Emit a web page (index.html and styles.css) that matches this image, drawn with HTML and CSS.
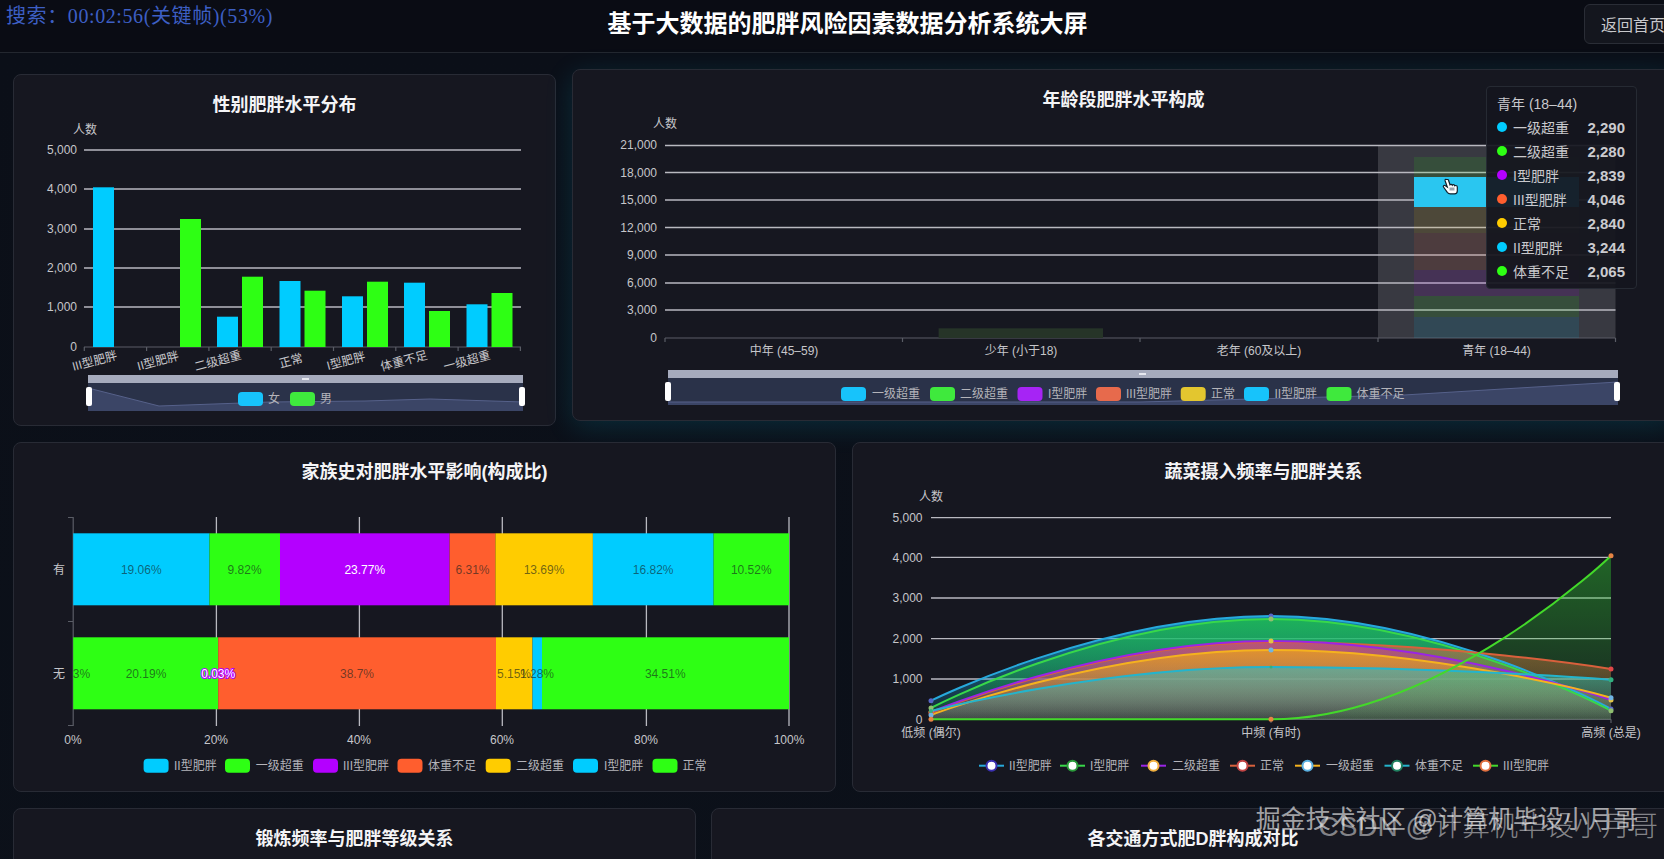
FILE: index.html
```html
<!DOCTYPE html>
<html lang="zh-CN">
<head>
<meta charset="utf-8">
<title>基于大数据的肥胖风险因素数据分析系统大屏</title>
<link rel="stylesheet" href="styles.css">
</head>
<body>
<div class="screen">
  <header class="topbar">
    <div class="topbar-spacer"></div>
    <h1 class="topbar-title">基于大数据的肥胖风险因素数据分析系统大屏</h1>
    <button class="back-btn">返回首页</button>
  </header>
  <main class="board">
    <section class="row row-one">
      <article class="card">
        <h2 class="card-title card-title-low">性别肥胖水平分布</h2>
        <svg class="chart" width="541" height="307" viewBox="14 118 541 307">
          <text class="t-axis mid" x="85" y="134">人数</text>
          <g class="grid">
            <line x1="84" x2="521" y1="150" y2="150"/><line x1="84" x2="521" y1="189" y2="189"/><line x1="84" x2="521" y1="229" y2="229"/><line x1="84" x2="521" y1="268" y2="268"/><line x1="84" x2="521" y1="307" y2="307"/>
          </g>
          <g class="t-axis end">
            <text x="77" y="154">5,000</text><text x="77" y="193">4,000</text><text x="77" y="233">3,000</text><text x="77" y="272">2,000</text><text x="77" y="311">1,000</text><text x="77" y="351">0</text>
          </g>
          <g class="axis">
            <line x1="84" x2="521" y1="347" y2="347"/>
            <line x1="84.3" x2="84.3" y1="347" y2="351"/><line x1="146.6" x2="146.6" y1="347" y2="351"/><line x1="208.9" x2="208.9" y1="347" y2="351"/><line x1="271.2" x2="271.2" y1="347" y2="351"/><line x1="333.5" x2="333.5" y1="347" y2="351"/><line x1="395.8" x2="395.8" y1="347" y2="351"/><line x1="458.1" x2="458.1" y1="347" y2="351"/><line x1="520.4" x2="520.4" y1="347" y2="351"/>
          </g>
          <g class="f-blue">
            <rect x="93" y="187.3" width="21" height="159.7"/><rect x="217" y="316.7" width="21" height="30.3"/><rect x="279.5" y="281" width="21" height="66"/><rect x="342" y="296.3" width="21" height="50.7"/><rect x="404" y="282.7" width="21" height="64.3"/><rect x="466.5" y="304.3" width="21" height="42.7"/>
          </g>
          <g class="f-green">
            <rect x="180" y="219" width="21" height="128"/><rect x="242" y="276.7" width="21" height="70.3"/><rect x="304.5" y="290.7" width="21" height="56.3"/><rect x="367" y="281.7" width="21" height="65.3"/><rect x="429" y="311" width="21" height="36"/><rect x="491.5" y="293" width="21" height="54"/>
          </g>
          <g class="t-axis mid">
            <text x="94.6" y="365" transform="rotate(-15 94.6 361)">III型肥胖</text>
            <text x="158" y="365" transform="rotate(-15 158 361)">II型肥胖</text>
            <text x="218" y="365" transform="rotate(-15 218 361)">二级超重</text>
            <text x="291" y="365" transform="rotate(-15 291 361)">正常</text>
            <text x="346" y="365" transform="rotate(-15 346 361)">I型肥胖</text>
            <text x="404" y="365" transform="rotate(-15 404 361)">体重不足</text>
            <text x="467" y="365" transform="rotate(-15 467 361)">一级超重</text>
          </g>
          <rect class="dz-strip" x="88" y="375" width="435" height="8"/>
          <rect class="dz-grip" x="302" y="378" width="7" height="2"/>
          <rect class="dz-body" x="88" y="383" width="435" height="28"/>
          <path class="dz-area" d="M88 388L159 406L270 402L365 401L430 399L523 402V411H88Z"/>
          <path class="dz-line" d="M88 388L159 406L270 402L365 401L430 399L523 402"/>
          <rect class="dz-handle" x="86" y="387" width="6" height="19" rx="2"/>
          <rect class="dz-handle" x="519" y="387" width="6" height="19" rx="2"/>
          <rect class="f-lblue" x="238" y="392" width="25" height="14" rx="4"/><text class="t-legend" x="268" y="403">女</text>
          <rect class="f-lgreen" x="290" y="392" width="25" height="14" rx="4"/><text class="t-legend" x="320" y="403">男</text>
        </svg>
      </article>
      <article class="card card-hover">
        <h2 class="card-title card-title-low">年龄段肥胖水平构成</h2>
        <svg class="chart" width="1101" height="307" viewBox="573 113 1101 307">
          <text class="t-axis mid" x="665" y="128">人数</text>
          <rect class="band" x="1378" y="145" width="237.5" height="193"/>
          <g class="grid">
            <line x1="665" x2="1615.5" y1="145.5" y2="145.5"/><line x1="665" x2="1615.5" y1="172.5" y2="172.5"/><line x1="665" x2="1615.5" y1="200" y2="200"/><line x1="665" x2="1615.5" y1="227.5" y2="227.5"/><line x1="665" x2="1615.5" y1="255" y2="255"/><line x1="665" x2="1615.5" y1="283" y2="283"/><line x1="665" x2="1615.5" y1="310" y2="310"/>
          </g>
          <g class="t-axis end">
            <text x="657" y="149">21,000</text><text x="657" y="177">18,000</text><text x="657" y="204">15,000</text><text x="657" y="232">12,000</text><text x="657" y="259">9,000</text><text x="657" y="287">6,000</text><text x="657" y="314">3,000</text><text x="657" y="342">0</text>
          </g>
          <g class="axis">
            <line x1="665" x2="1615.5" y1="338" y2="338"/>
            <line x1="665" x2="665" y1="338" y2="342"/><line x1="902.5" x2="902.5" y1="338" y2="342"/><line x1="1140" x2="1140" y1="338" y2="342"/><line x1="1378" x2="1378" y1="338" y2="342"/><line x1="1615.5" x2="1615.5" y1="338" y2="342"/>
          </g>
          <rect class="f-ghost-green" x="938.6" y="328.3" width="164.4" height="9.7"/>
          <g class="ghost">
            <rect class="f-blue" x="1414" y="317" width="165" height="21"/>
            <rect class="f-green" x="1414" y="296" width="165" height="21"/>
            <rect class="f-purple" x="1414" y="270" width="165" height="26"/>
            <rect class="f-orange" x="1414" y="233" width="165" height="37"/>
            <rect class="f-yellow" x="1414" y="207" width="165" height="26"/>
            <rect class="f-green" x="1414" y="157" width="165" height="20"/>
          </g>
          <rect class="f-hi" x="1414" y="177" width="165" height="30"/>
          <path class="hand" d="M1446.5 179.5c-.9-.4-1.7.2-1.4 1.2l2.2 6.3-2.3-1.5c-1-.6-2.2.5-1.5 1.5l3.8 5.3c.8 1 1.7 1.5 3 1.500h4.2c1.600 0 2.800-1.200 2.800-2.800v-3.900c0-1-.7-1.600-1.500-1.600-.4 0-.7.1-1 .3-.2-.8-.9-1.200-1.600-1.100-.4 0-.7.2-.9.500-.3-.7-1-1-1.600-.8-.3 0-.5.2-.7.400l-1.500-4.500c-.2-.4-.4-.6-.5-.8z"/>
          <rect class="hand-mark" x="1449.5" y="187.5" width="5" height="3"/>
          <g class="t-axis mid">
            <text x="784" y="355">中年 (45–59)</text><text x="1021" y="355">少年 (小于18)</text><text x="1259" y="355">老年 (60及以上)</text><text x="1496.5" y="355">青年 (18–44)</text>
          </g>
          <rect class="dz-strip" x="668" y="370" width="950" height="8"/>
          <rect class="dz-grip" x="1139" y="373" width="7" height="2"/>
          <rect class="dz-body" x="668" y="378" width="950" height="27"/>
          <path class="dz-area" d="M668 402L1140 402L1404 395L1618 382V405H668Z"/>
          <path class="dz-line" d="M668 402L1140 402L1404 395L1618 382"/>
          <rect class="dz-handle" x="665" y="382" width="6" height="19" rx="2"/>
          <rect class="dz-handle" x="1614" y="382" width="6" height="19" rx="2"/>
          <rect class="f-lblue" x="841" y="387" width="25" height="14" rx="4"/><text class="t-legend" x="872" y="398">一级超重</text>
          <rect class="f-lgreen" x="930" y="387" width="25" height="14" rx="4"/><text class="t-legend" x="960" y="398">二级超重</text>
          <rect class="f-lpurple" x="1017.5" y="387" width="25" height="14" rx="4"/><text class="t-legend" x="1048" y="398">I型肥胖</text>
          <rect class="f-lorange" x="1096" y="387" width="25" height="14" rx="4"/><text class="t-legend" x="1126" y="398">III型肥胖</text>
          <rect class="f-lyellow" x="1180.7" y="387" width="25" height="14" rx="4"/><text class="t-legend" x="1211" y="398">正常</text>
          <rect class="f-lblue" x="1244" y="387" width="25" height="14" rx="4"/><text class="t-legend" x="1274.4" y="398">II型肥胖</text>
          <rect class="f-lgreen" x="1326.5" y="387" width="25" height="14" rx="4"/><text class="t-legend" x="1356.6" y="398">体重不足</text>
        </svg>
        <div class="tooltip">
          <div class="tooltip-head">青年 (18–44)</div>
          <div class="tooltip-row"><i class="dot dot-blue"></i><span class="tooltip-name">一级超重</span><b class="tooltip-value">2,290</b></div>
          <div class="tooltip-row"><i class="dot dot-green"></i><span class="tooltip-name">二级超重</span><b class="tooltip-value">2,280</b></div>
          <div class="tooltip-row"><i class="dot dot-purple"></i><span class="tooltip-name">I型肥胖</span><b class="tooltip-value">2,839</b></div>
          <div class="tooltip-row"><i class="dot dot-orange"></i><span class="tooltip-name">III型肥胖</span><b class="tooltip-value">4,046</b></div>
          <div class="tooltip-row"><i class="dot dot-yellow"></i><span class="tooltip-name">正常</span><b class="tooltip-value">2,840</b></div>
          <div class="tooltip-row"><i class="dot dot-blue"></i><span class="tooltip-name">II型肥胖</span><b class="tooltip-value">3,244</b></div>
          <div class="tooltip-row"><i class="dot dot-green"></i><span class="tooltip-name">体重不足</span><b class="tooltip-value">2,065</b></div>
        </div>
      </article>
    </section>
    <section class="row row-two">
      <article class="card">
        <h2 class="card-title">家族史对肥胖水平影响(构成比)</h2>
        <svg class="chart" width="821" height="305" viewBox="14 486 821 305">
          <defs><clipPath id="plot-clip"><rect x="73.2" y="500" width="716" height="240"/></clipPath></defs>
          <g class="grid">
            <line x1="216.4" x2="216.4" y1="517" y2="726"/><line x1="359.4" x2="359.4" y1="517" y2="726"/><line x1="502.3" x2="502.3" y1="517" y2="726"/><line x1="646.4" x2="646.4" y1="517" y2="726"/><line x1="789" x2="789" y1="517" y2="726"/>
          </g>
          <path class="axis" d="M68 517.5H73.2V725.5H68M68 621.5H73.2"/>
          <g class="t-axis mid"><text x="59" y="573.5">有</text><text x="59" y="677.5">无</text></g>
          <rect class="f-blue" x="73.2" y="533.3" width="136.3" height="72"/>
          <rect class="f-green" x="209.5" y="533.3" width="70.5" height="72"/>
          <rect class="f-purple" x="280" y="533.3" width="169.6" height="72"/>
          <rect class="f-orange" x="449.6" y="533.3" width="45.8" height="72"/>
          <rect class="f-yellow" x="495.4" y="533.3" width="97.5" height="72"/>
          <rect class="f-blue" x="592.9" y="533.3" width="120.7" height="72"/>
          <rect class="f-green" x="713.6" y="533.3" width="75.4" height="72"/>
          <rect class="f-green" x="73.2" y="637.3" width="145" height="72"/>
          <rect class="f-orange" x="218.2" y="637.3" width="277.8" height="72"/>
          <rect class="f-yellow" x="496" y="637.3" width="36.5" height="72"/>
          <rect class="f-blue" x="532.5" y="637.3" width="9.5" height="72"/>
          <rect class="f-green" x="542" y="637.3" width="247" height="72"/>
          <g class="t-bar mid">
            <text x="141.3" y="573.5">19.06%</text><text x="244.6" y="573.5">9.82%</text><text class="t-bar-hi" x="364.8" y="573.5">23.77%</text><text x="472.5" y="573.5">6.31%</text><text x="544" y="573.5">13.69%</text><text x="653.2" y="573.5">16.82%</text><text x="751.3" y="573.5">10.52%</text>
            <text clip-path="url(#plot-clip)" x="73.2" y="677.5">0.03%</text><text x="146" y="677.5">20.19%</text><text class="t-bar-hi" x="218.2" y="677.5">0.03%</text><text x="357" y="677.5">38.7%</text><text x="514" y="677.5">5.15%</text><text x="537" y="677.5">1.28%</text><text x="665.3" y="677.5">34.51%</text>
          </g>
          <g class="t-axis mid">
            <text x="73" y="744">0%</text><text x="216" y="744">20%</text><text x="359" y="744">40%</text><text x="502" y="744">60%</text><text x="646" y="744">80%</text><text x="789" y="744">100%</text>
          </g>
          <rect class="f-blue r4" x="143.6" y="758.7" width="25" height="14"/><text class="t-legend" x="174" y="770">II型肥胖</text>
          <rect class="f-green r4" x="225" y="758.7" width="25" height="14"/><text class="t-legend" x="255.7" y="770">一级超重</text>
          <rect class="f-purple r4" x="313" y="758.7" width="25" height="14"/><text class="t-legend" x="343" y="770">III型肥胖</text>
          <rect class="f-orange r4" x="397.5" y="758.7" width="25" height="14"/><text class="t-legend" x="428" y="770">体重不足</text>
          <rect class="f-yellow r4" x="485.7" y="758.7" width="25" height="14"/><text class="t-legend" x="516" y="770">二级超重</text>
          <rect class="f-blue r4" x="573" y="758.7" width="25" height="14"/><text class="t-legend" x="604" y="770">I型肥胖</text>
          <rect class="f-green r4" x="652.5" y="758.7" width="25" height="14"/><text class="t-legend" x="682.5" y="770">正常</text>
        </svg>
      </article>
      <article class="card">
        <h2 class="card-title">蔬菜摄入频率与肥胖关系</h2>
        <svg class="chart" width="821" height="305" viewBox="853 486 821 305">
          <defs>
            <linearGradient id="a1" x1="0" y1="0" x2="0" y2="1"><stop class="s-blue" offset="0"/><stop class="s-blue s-end" offset="1"/></linearGradient>
            <linearGradient id="a2" x1="0" y1="0" x2="0" y2="1"><stop class="s-green" offset="0"/><stop class="s-green s-end" offset="1"/></linearGradient>
            <linearGradient id="a3" x1="0" y1="0" x2="0" y2="1"><stop class="s-purple" offset="0"/><stop class="s-purple s-end" offset="1"/></linearGradient>
            <linearGradient id="a4" x1="0" y1="0" x2="0" y2="1"><stop class="s-orange" offset="0"/><stop class="s-orange s-end" offset="1"/></linearGradient>
            <linearGradient id="a5" x1="0" y1="0" x2="0" y2="1"><stop class="s-yellow" offset="0"/><stop class="s-yellow s-end" offset="1"/></linearGradient>
            <linearGradient id="a6" x1="0" y1="0" x2="0" y2="1"><stop class="s-cyan" offset="0"/><stop class="s-cyan s-end" offset="1"/></linearGradient>
            <linearGradient id="a7" x1="0" y1="0" x2="0" y2="1"><stop class="s-green2" offset="0"/><stop class="s-green2 s-end" offset="1"/></linearGradient>
          </defs>
          <text class="t-axis mid" x="931" y="501">人数</text>
          <g class="grid">
            <line x1="931" x2="1611" y1="517.7" y2="517.7"/><line x1="931" x2="1611" y1="557.3" y2="557.3"/><line x1="931" x2="1611" y1="598" y2="598"/><line x1="931" x2="1611" y1="638.7" y2="638.7"/><line x1="931" x2="1611" y1="679" y2="679"/>
          </g>
          <g class="t-axis end">
            <text x="922.5" y="522">5,000</text><text x="922.5" y="562">4,000</text><text x="922.5" y="602">3,000</text><text x="922.5" y="643">2,000</text><text x="922.5" y="683">1,000</text><text x="922.5" y="724">0</text>
          </g>
          <g class="axis"><line x1="931" x2="1611" y1="719.3" y2="719.3"/><line x1="1271" x2="1271" y1="719.3" y2="723"/><line x1="1611" x2="1611" y1="719.3" y2="723"/></g>
          <path fill="url(#a1)" d="M931 700.7C931 700.7 1101 616 1271 616C1441 616 1611 709 1611 709V719.3H931Z"/>
          <path fill="url(#a2)" d="M931 708C931 708 1101 619 1271 619C1441 619 1611 710.7 1611 710.7V719.3H931Z"/>
          <path fill="url(#a3)" d="M931 712C931 712 1101 641 1271 641C1441 641 1611 700 1611 700V719.3H931Z"/>
          <path fill="url(#a4)" d="M931 713C931 713 1101 642 1271 642C1441 642 1611 669 1611 669V719.3H931Z"/>
          <path fill="url(#a5)" d="M931 715C931 715 1101 650 1271 650C1441 650 1611 697.7 1611 697.7V719.3H931Z"/>
          <path fill="url(#a6)" d="M931 711C931 711 1101 667 1271 667C1441 667 1611 679.7 1611 679.7V719.3H931Z"/>
          <path fill="url(#a7)" d="M931 719.3H1271C1441 719.3 1611 555.7 1611 555.7V719.3Z"/>
          <path class="ln ln-blue" d="M931 700.7C931 700.7 1101 616 1271 616C1441 616 1611 709 1611 709"/>
          <path class="ln ln-green" d="M931 708C931 708 1101 619 1271 619C1441 619 1611 710.7 1611 710.7"/>
          <path class="ln ln-orange" d="M931 713C931 713 1101 642 1271 642C1441 642 1611 669 1611 669"/>
          <path class="ln ln-purple" d="M931 712C931 712 1101 641 1271 641C1441 641 1611 700 1611 700"/>
          <path class="ln ln-yellow" d="M931 715C931 715 1101 650 1271 650C1441 650 1611 697.7 1611 697.7"/>
          <path class="ln ln-cyan" d="M931 711C931 711 1101 667 1271 667C1441 667 1611 679.7 1611 679.7"/>
          <path class="ln ln-green2" d="M931 719.3H1271C1441 719.3 1611 555.7 1611 555.7"/>
          <g class="pts-indigo"><circle cx="931" cy="700.7" r="2.5"/><circle cx="1271" cy="616" r="2.5"/><circle cx="1611" cy="709" r="2.5"/></g>
          <g class="pts-olive"><circle cx="931" cy="708" r="2.5"/><circle cx="1271" cy="619" r="2.5"/><circle cx="1611" cy="710.7" r="2.5"/></g>
          <g class="pts-gold"><circle cx="931" cy="712" r="2.5"/><circle cx="1271" cy="641" r="2.5"/><circle cx="1611" cy="700" r="2.5"/></g>
          <g class="pts-red"><circle cx="931" cy="713" r="2.5"/><circle cx="1611" cy="669" r="2.5"/></g>
          <g class="pts-sky"><circle cx="931" cy="715" r="2.5"/><circle cx="1271" cy="650" r="2.5"/><circle cx="1611" cy="697.7" r="2.5"/></g>
          <g class="pts-teal"><circle cx="931" cy="711" r="2"/><circle cx="1271" cy="667" r="1.5"/><circle cx="1611" cy="679.7" r="2.5"/></g>
          <g class="pts-amber"><circle cx="931" cy="719.3" r="2.5"/><circle cx="1271" cy="719.3" r="2.5"/><circle cx="1611" cy="555.7" r="2.5"/></g>
          <g class="t-axis mid"><text x="931" y="737">低频 (偶尔)</text><text x="1271" y="737">中频 (有时)</text><text x="1611" y="737">高频 (总是)</text></g>
          <g>
            <line class="ln-legend ln-blue" x1="979" x2="1004" y1="765.7" y2="765.7"/><circle class="mark mark-indigo" cx="991.5" cy="765.7" r="5"/><text class="t-legend" x="1009" y="770">II型肥胖</text>
            <line class="ln-legend ln-green" x1="1060" x2="1085" y1="765.7" y2="765.7"/><circle class="mark mark-olive" cx="1072.5" cy="765.7" r="5"/><text class="t-legend" x="1090" y="770">I型肥胖</text>
            <line class="ln-legend ln-purple" x1="1141" x2="1166" y1="765.7" y2="765.7"/><circle class="mark mark-gold" cx="1153.5" cy="765.7" r="5"/><text class="t-legend" x="1172" y="770">二级超重</text>
            <line class="ln-legend ln-orange" x1="1230" x2="1255" y1="765.7" y2="765.7"/><circle class="mark mark-red" cx="1242.5" cy="765.7" r="5"/><text class="t-legend" x="1260" y="770">正常</text>
            <line class="ln-legend ln-yellow" x1="1295" x2="1320" y1="765.7" y2="765.7"/><circle class="mark mark-sky" cx="1307.5" cy="765.7" r="5"/><text class="t-legend" x="1326" y="770">一级超重</text>
            <line class="ln-legend ln-cyan" x1="1384.5" x2="1409.5" y1="765.7" y2="765.7"/><circle class="mark mark-teal" cx="1397" cy="765.7" r="5"/><text class="t-legend" x="1415" y="770">体重不足</text>
            <line class="ln-legend ln-green2" x1="1473" x2="1498" y1="765.7" y2="765.7"/><circle class="mark mark-amber" cx="1485.5" cy="765.7" r="5"/><text class="t-legend" x="1503" y="770">III型肥胖</text>
          </g>
        </svg>
      </article>
    </section>
    <section class="row row-three">
      <article class="card card-tall"><h2 class="card-title card-title-low">锻炼频率与肥胖等级关系</h2></article>
      <article class="card card-tall"><h2 class="card-title card-title-low">各交通方式肥D胖构成对比</h2></article>
    </section>
  </main>
</div>
<div class="video-status">搜索：00:02:56(关键帧)(53%)</div>
<div class="watermark watermark-a">掘金技术社区 @计算机毕设小月哥</div>
<div class="watermark watermark-b">CSDN @计算机毕设小月哥</div>
</body>
</html>
```
FILE: styles.css
```css
* { box-sizing: border-box; }
html, body { margin: 0; height: 100%; }
body {
  width: 1664px;
  height: 859px;
  overflow: hidden;
  position: relative;
  background: #0b0e17;
  color: #fff;
  font-family: "Liberation Sans", "Noto Sans CJK SC", sans-serif;
}
.screen { width: 1688px; height: 859px; overflow: hidden; }

.topbar {
  height: 53px;
  display: flex;
  align-items: center;
  justify-content: space-between;
  padding-bottom: 5px;
  background: #0a0c14;
  border-bottom: 1px solid #23272f;
}
.topbar-spacer { width: 111px; }
.topbar-title { margin: 0; font-size: 24px; line-height: 32px; font-weight: 700; color: #fff; }
.back-btn {
  width: 104px;
  height: 40px;
  padding: 0 0 0 16px;
  text-align: left;
  border: 1px solid #2a2d36;
  border-radius: 6px;
  background: #14161e;
  color: #c8c8cc;
  font: 400 16px "Liberation Sans", "Noto Sans CJK SC", sans-serif;
  white-space: nowrap;
  overflow: hidden;
}

.board {
  padding: 21px 13px 0;
  display: flex;
  flex-direction: column;
  gap: 16px;
  background: linear-gradient(180deg, #0b0f18, #0c111a);
}
.row { display: flex; gap: 16px; }
.row-one > .card { height: 352px; }
.row-one > .card:first-child { width: 543px; }
.row-one > .card:last-child { width: 1103px; }
.row-two > .card { width: 823px; height: 350px; }
.row-three { gap: 15px; }
.row-three > .card:first-child { width: 683px; }
.row-three > .card:last-child { width: 964px; }

.card {
  position: relative;
  flex: none;
  background: #161720;
  border: 1px solid #282b35;
  border-radius: 8px;
}
.card-tall { height: 352px; }
.card-hover {
  transform: translateY(-5px);
  box-shadow: 0 6px 28px rgba(0, 190, 230, 0.16);
}
.card-title {
  margin: 0;
  height: 43px;
  padding-top: 16px;
  font-size: 18px;
  line-height: 26px;
  font-weight: 700;
  text-align: center;
  color: #f4f4f6;
}
.card-title-low { padding-top: 17px; }
.chart { display: block; }

/* chart text */
.t-axis { font-size: 12px; fill: #c6c6ca; }
.t-legend { font-size: 12px; fill: #b4b4ba; }
.t-bar { font-size: 12px; fill: rgba(20, 30, 30, 0.62); }
.t-bar-hi { fill: #fff; stroke: #b400ff; stroke-width: 2px; paint-order: stroke; }
.mid { text-anchor: middle; }
.end { text-anchor: end; }

/* axes */
.grid line { stroke: #b9b9c0; stroke-width: 1.3px; }
.axis { stroke: #5a5d66; stroke-width: 1.2px; fill: none; }
.axis line { stroke: #5a5d66; stroke-width: 1.2px; }
.band { fill: rgba(255, 255, 255, 0.15); }

/* palette */
.f-blue { fill: #00ccff; }
.f-green { fill: #2eff14; }
.f-purple { fill: #b400ff; }
.f-orange { fill: #ff5e2e; }
.f-yellow { fill: #ffcc00; }
.f-hi { fill: #2ac6f0; }
.f-ghost-green { fill: #263428; }
.f-lblue { fill: #17c3fb; }
.f-lgreen { fill: #3fe93d; }
.f-lpurple { fill: #a624f5; }
.f-lorange { fill: #e76a4c; }
.f-lyellow { fill: #e3c62f; }
.r4 { rx: 4px; ry: 4px; }
.ghost rect { opacity: 0.11; }

/* data zoom */
.dz-strip { fill: #a6abbd; }
.dz-grip { fill: #e6e8ef; }
.dz-body { fill: #2a3249; }
.dz-area { fill: #3b4566; }
.dz-line { fill: none; stroke: #56618a; stroke-width: 1px; }
.dz-handle { fill: #fff; }

/* hand cursor */
.hand { fill: #fff; stroke: #10202c; stroke-width: 1.2px; }
.hand-mark { fill: #9aa3ad; }

/* area gradients */
.s-blue { stop-color: #14b4e8; stop-opacity: 0.7; }
.s-green { stop-color: #20c040; stop-opacity: 0.75; }
.s-purple { stop-color: #a020e0; stop-opacity: 0.7; }
.s-orange { stop-color: #f06040; stop-opacity: 0.55; }
.s-yellow { stop-color: #ffb800; stop-opacity: 0.6; }
.s-cyan { stop-color: #20c0d0; stop-opacity: 0.55; }
.s-green2 { stop-color: #30d030; stop-opacity: 0.42; }
.s-end { stop-opacity: 0.08; }

/* lines */
.ln { fill: none; stroke-width: 2px; }
.ln-legend { stroke-width: 2px; }
.ln-blue { stroke: #27a9dc; }
.ln-green { stroke: #38d84a; }
.ln-purple { stroke: #9a24e6; }
.ln-orange { stroke: #d9603c; }
.ln-yellow { stroke: #f5b21e; }
.ln-cyan { stroke: #24b4cc; }
.ln-green2 { stroke: #43d92a; }

.pts-indigo { fill: #5766c8; }
.pts-olive { fill: #8fbf70; }
.pts-gold { fill: #e2c445; }
.pts-red { fill: #e04848; }
.pts-sky { fill: #70b4e4; }
.pts-teal { fill: #30b080; }
.pts-amber { fill: #e68444; }

.mark { fill: #fff; stroke-width: 2px; }
.mark-indigo { stroke: #3a2fb0; }
.mark-olive { stroke: #2a9a3a; }
.mark-gold { stroke: #f0b040; }
.mark-red { stroke: #c04444; }
.mark-sky { stroke: #5ab0e0; }
.mark-teal { stroke: #208060; }
.mark-amber { stroke: #e07040; }

/* tooltip */
.tooltip {
  position: absolute;
  left: 913px;
  top: 16px;
  width: 151px;
  height: 203px;
  padding: 6px 11px 0 10px;
  background: rgba(20, 22, 30, 0.93);
  border: 1px solid #262a33;
  border-radius: 4px;
  color: #c9c9cd;
  font-size: 14px;
}
.tooltip-head { height: 22px; line-height: 22px; }
.tooltip-row { display: flex; align-items: center; height: 24px; }
.dot { width: 10px; height: 10px; border-radius: 50%; margin-right: 6px; flex: none; }
.dot-blue { background: #00ccff; }
.dot-green { background: #2eff14; }
.dot-purple { background: #b400ff; }
.dot-orange { background: #ff5e2e; }
.dot-yellow { background: #ffcc00; }
.tooltip-name { flex: 1; }
.tooltip-value { font-size: 15px; font-weight: 700; color: #cbcbcf; }

/* video overlays */
.video-status {
  position: absolute;
  left: 6px;
  top: 2px;
  font-family: "Liberation Serif", "Noto Sans CJK SC", serif;
  font-size: 20px;
  line-height: 28px;
  letter-spacing: 0.6px;
  color: #3d5fc4;
  white-space: nowrap;
}
.watermark {
  position: absolute;
  white-space: nowrap;
}
.watermark-a { right: 26px; top: 803px; font-size: 25px; line-height: 32px; color: rgba(255, 255, 255, 0.62); }
.watermark-b { right: 6px; top: 807px; font-size: 28px; line-height: 40px; font-weight: 300; color: rgba(255, 255, 255, 0.48); }
```
